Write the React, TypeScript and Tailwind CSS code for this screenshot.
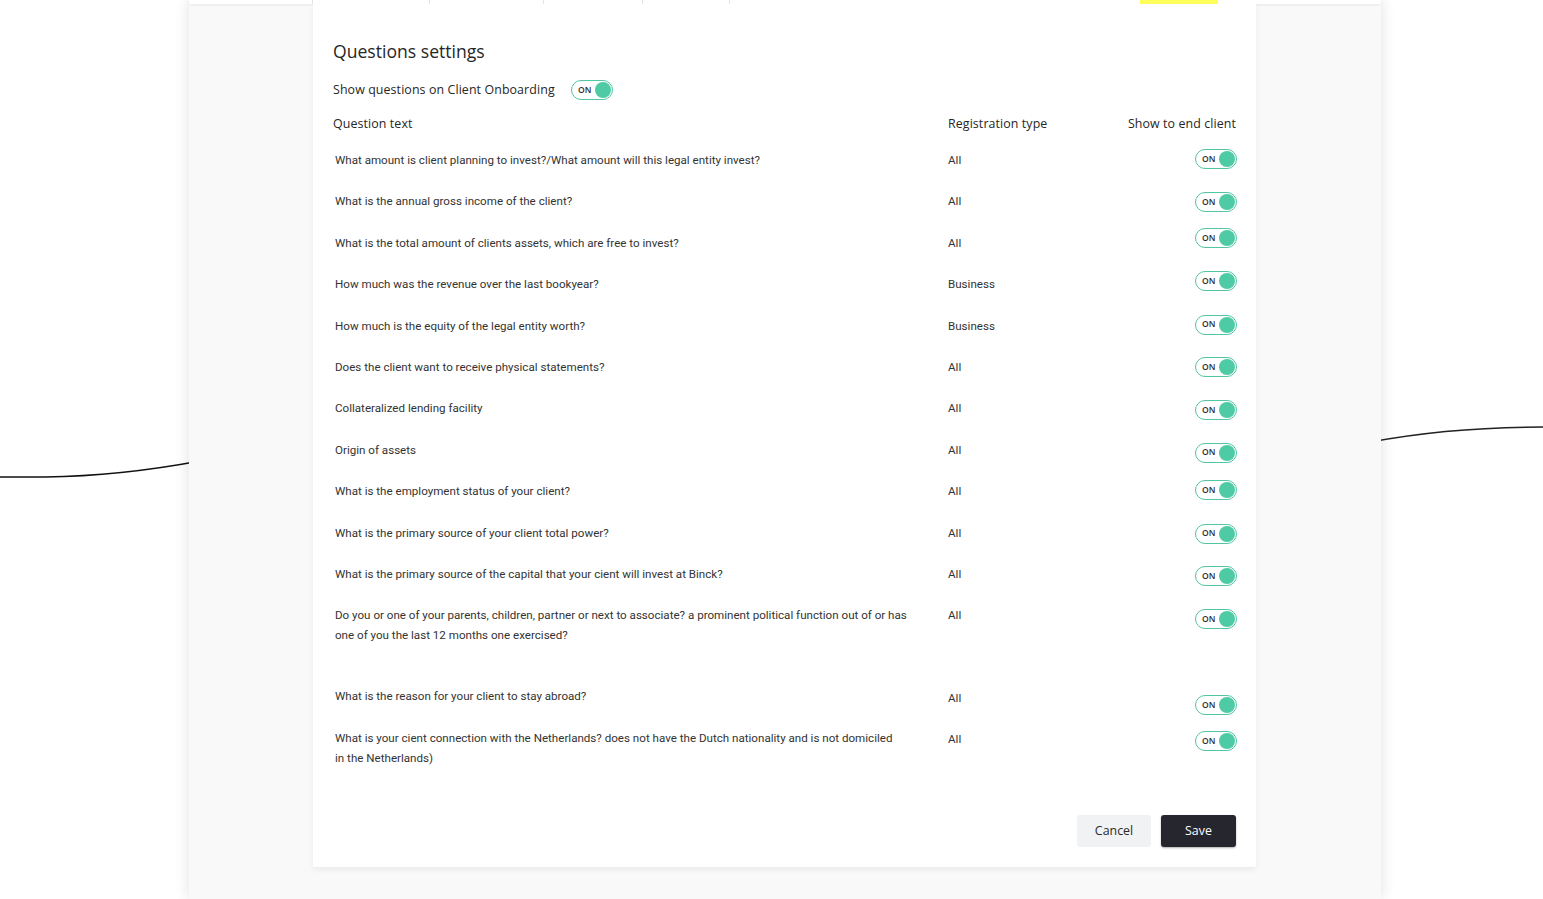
const questions = [
  { text: 'What amount is client planning to invest?/What amount will this legal entity invest?', type: 'All', row: 'h-[41.4px]', toggle: '-mt-[1px]', reg: '' },
  { text: 'What is the annual gross income of the client?', type: 'All', row: 'h-[41.4px]', toggle: 'mt-[1px]', reg: '' },
  { text: 'What is the total amount of clients assets, which are free to invest?', type: 'All', row: 'h-[41.4px]', toggle: '-mt-[5px]', reg: '' },
  { text: 'How much was the revenue over the last bookyear?', type: 'Business', row: 'h-[41.4px]', toggle: '-mt-[3px]', reg: '' },
  { text: 'How much is the equity of the legal entity worth?', type: 'Business', row: 'h-[41.4px]', toggle: '-mt-[1px]', reg: '' },
  { text: 'Does the client want to receive physical statements?', type: 'All', row: 'h-[41.4px]', toggle: 'mt-0', reg: '' },
  { text: 'Collateralized lending facility', type: 'All', row: 'h-[41.4px]', toggle: 'mt-[2px]', reg: '' },
  { text: 'Origin of assets', type: 'All', row: 'h-[41.4px]', toggle: 'mt-[3px]', reg: '' },
  { text: 'What is the employment status of your client?', type: 'All', row: 'h-[41.4px]', toggle: '-mt-[1px]', reg: '' },
  { text: 'What is the primary source of your client total power?', type: 'All', row: 'h-[41.4px]', toggle: 'mt-[1px]', reg: '' },
  { text: 'What is the primary source of the capital that your cient will invest at Binck?', type: 'All', row: 'h-[41.4px]', toggle: 'mt-[2px]', reg: '' },
  { text: 'Do you or one of your parents, children, partner or next to associate? a prominent political function out of or has one of you the last 12 months one exercised?', type: 'All', row: 'h-[81px]', toggle: 'mt-[4px]', reg: '' },
  { text: 'What is the reason for your client to stay abroad?', type: 'All', row: 'h-[42px]', toggle: 'mt-[9px]', reg: 'mt-[2px]' },
  { text: 'What is your cient connection with the Netherlands? does not have the Dutch nationality and is not domiciled\nin the Netherlands)', type: 'All', row: 'h-[40px]', toggle: 'mt-[3px]', reg: 'mt-[1px]' },
];

const head = { fontFamily: '"Open Sans", "Noto Sans", sans-serif' };
const body = { fontFamily: 'Roboto, "Liberation Sans", sans-serif' };

function Toggle({ className = '' }: { className?: string }) {
  return (
    <div
      className={`flex h-[20px] w-[42px] shrink-0 items-center justify-between rounded-full border-[1.5px] border-[#52c5a3] bg-white pl-[6px] pr-[1.5px] ${className}`}
    >
      <span className="text-[8.5px] font-semibold leading-none text-[#2c2c2c]" style={head}>
        ON
      </span>
      <span className="h-[16px] w-[16px] rounded-full bg-[#4ecba5]" />
    </div>
  );
}

export default function App() {
  return (
    <div className="relative h-[899px] w-full overflow-hidden bg-white">
      {/* decorative strokes behind the frame */}
      <svg className="absolute inset-0 h-full w-full" viewBox="0 0 1543 899" preserveAspectRatio="none">
        <path d="M0 477 L45 477 Q120 476 200 461" fill="none" stroke="#111" strokeWidth="1.5" />
        <path d="M1370 442 Q1450 427 1543 427" fill="none" stroke="#222" strokeWidth="1.5" />
      </svg>

      <div className="relative ml-[189px] flex h-full w-[1192px] flex-col bg-[#f9f9f9] shadow-[0_0_14px_rgba(0,0,0,0.12)]">
        {/* tab strip */}
        <div className="flex h-[4px] shrink-0 bg-white shadow-[0_1px_3px_rgba(0,0,0,0.08)]">
          <div className="w-[124px] border-r border-[#e4e4e4]" />
          <div className="w-[117px] border-r border-[#e4e4e4]" />
          <div className="w-[114px] border-r border-[#e4e4e4]" />
          <div className="w-[99px] border-r border-[#e4e4e4]" />
          <div className="w-[87px] border-r border-[#e4e4e4]" />
          <div className="w-[410px]" />
          <div className="w-[78px] bg-[#ffff5c]" />
        </div>

        <div className="ml-[124px] w-[943px] bg-white px-[20px] pb-[20px] pt-[35px] shadow-[0_3px_6px_rgba(0,0,0,0.06)]">
          <h1 className="h-[24px] text-[17.6px] leading-[24px] text-[#262626]" style={head}>
            Questions settings
          </h1>

          <div className="mt-[17px] flex h-[20px] items-center">
            <span className="w-[238px] text-[12.4px] font-medium tracking-[0.1px] text-[#262626]" style={head}>
              Show questions on Client Onboarding
            </span>
            <Toggle />
          </div>

          <div className="mt-[16px] flex h-[16px] items-center text-[12.4px] font-medium leading-[16px] tracking-[0.1px] text-[#262626]" style={head}>
            <span className="w-[615px]">Question text</span>
            <span className="flex-1">Registration type</span>
            <span>Show to end client</span>
          </div>

          <div className="mt-[18px]">
            {questions.map((q) => (
              <div key={q.text} className={`flex items-start ${q.row}`}>
                <p className="w-[574px] whitespace-pre-line pl-[2px] text-[11.6px] leading-[20px] text-[#333]" style={body}>
                  {q.text}
                </p>
                <span className={`ml-[41px] flex-1 text-[11.6px] leading-[20px] text-[#333] ${q.reg}`} style={body}>
                  {q.type}
                </span>
                <Toggle className={`mr-[-1px] ${q.toggle}`} />
              </div>
            ))}
          </div>

          <div className="mt-[47px] flex justify-end gap-[10px]">
            <button
              className="h-[32px] w-[74px] rounded-[3px] bg-[#f1f2f4] text-[12.4px] font-medium text-[#2a2a2a]"
              style={head}
            >
              Cancel
            </button>
            <button
              className="h-[32px] w-[75px] rounded-[3px] bg-[#25262e] text-[12.4px] font-medium text-white shadow-[0_1px_2px_rgba(0,0,0,0.3)]"
              style={head}
            >
              Save
            </button>
          </div>
        </div>
      </div>
    </div>
  );
}
